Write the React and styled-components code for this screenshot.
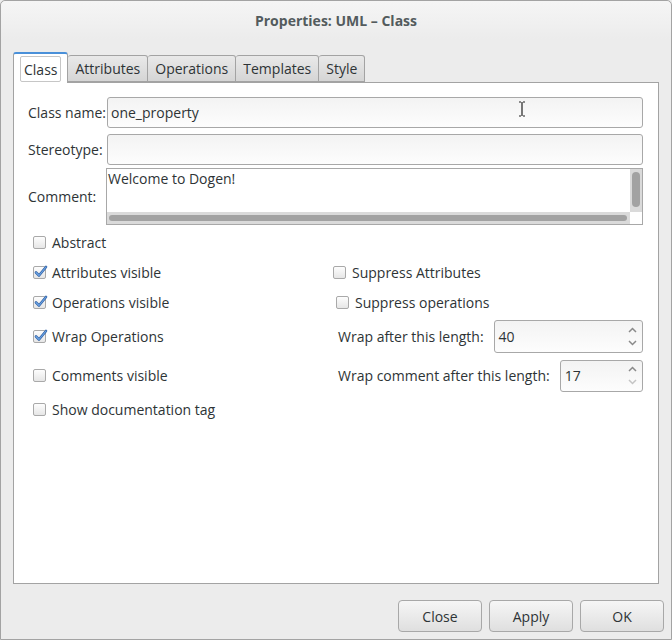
import React from 'react';
import styled, { createGlobalStyle } from 'styled-components';

const GlobalStyle = createGlobalStyle`
    html, body {
        margin: 0;
        padding: 0;
        background: #ececec;
    }
    body {
        font-family: "Open Sans", "DejaVu Sans", sans-serif;
        font-size: 14px;
        color: #2e3436;
    }
`;

const Window = styled.div`
    width: 672px;
    height: 640px;
    box-sizing: border-box;
    border: 1px solid #a3a3a3;
    border-radius: 5px 5px 0 0;
    background: #ececec;
    display: flex;
    flex-direction: column;
`;

const TitleBar = styled.div`
    height: 38px;
    flex: none;
    display: flex;
    align-items: center;
    justify-content: center;
    font-weight: 700;
    font-size: 14px;
    color: #535b5d;
    background: linear-gradient(#f5f5f5, #ececec);
    border-radius: 5px 5px 0 0;
`;

const TabStrip = styled.div`
    display: flex;
    align-items: flex-end;
    margin: 12px 12px 0 12px;
    height: 31px;
    position: relative;
    z-index: 1;
`;

const Tab = styled.div`
    box-sizing: border-box;
    display: flex;
    align-items: center;
    justify-content: center;
    padding: 0 ${p => (p.active ? '6px' : '7px')};
    height: ${p => (p.active ? '31px' : '27px')};
    margin-bottom: ${p => (p.active ? '-1px' : '0')};
    border: 1px solid #a3a3a3;
    border-left-width: ${p => (p.first ? '1px' : '0')};
    border-bottom: ${p => (p.active ? 'none' : '1px solid #a3a3a3')};
    border-top: ${p => (p.active ? '2px solid #4a90d9' : '1px solid #a3a3a3')};
    border-radius: 3px 3px 0 0;
    background: ${p => (p.active ? '#fff' : 'linear-gradient(#e9e9e9, #d5d5d5)')};
    color: #2e3436;
`;

const FocusRing = styled.span`
    display: flex;
    align-items: center;
    padding: 0 3px;
    height: 24px;
    margin-top: 1px;
    border: 1px solid #c6c6c6;
    border-radius: 2px;
`;

const Panel = styled.div`
    flex: 1;
    margin: 0 12px;
    background: #fff;
    border: 1px solid #a3a3a3;
    padding: 14px 15px 0 14px;
`;

const FieldGrid = styled.div`
    display: grid;
    grid-template-columns: 77px 1fr;
    grid-template-rows: 31px 34px 57px;
    column-gap: 2px;
    row-gap: 3px;
`;

const FieldLabel = styled.label`
    align-self: center;
    white-space: nowrap;
    margin-top: ${p => p.shift || 0}px;
`;

const TextInput = styled.div`
    position: relative;
    box-sizing: border-box;
    height: 31px;
    align-self: end;
    display: flex;
    align-items: center;
    padding: 0 3px;
    border: 1px solid #a8a8a8;
    border-radius: 3px;
    background: linear-gradient(#f3f3f3, #fdfdfd);
`;

const Cursor = styled.svg`
    position: absolute;
    left: 410px;
    top: 3px;
`;

const TextArea = styled.div`
    box-sizing: border-box;
    margin-left: -1px;
    display: grid;
    grid-template-columns: 1fr 12px;
    grid-template-rows: 1fr 12px;
    border: 1px solid #a8a8a8;
    background: #fff;
`;

const AreaText = styled.div`
    padding: 1px 0 0 1px;
    line-height: 18px;
`;

const VTrack = styled.div`
    background: #dadada;
    padding: 3px 2px 4px 2px;
`;

const HTrack = styled.div`
    background: #dadada;
    padding: 3px 3px 3px 2px;
`;

const Thumb = styled.div`
    background: #a2a2a2;
    border-radius: 4px;
    height: ${p => (p.vertical ? '35px' : '100%')};
    width: 100%;
`;

const Corner = styled.div`
    background: #fff;
`;

const Options = styled.div`
    display: grid;
    grid-template-columns: 300px 1fr;
    grid-template-rows: 30px 30px 30px 38px 41px 26px;
    margin-top: 2px;
    padding-left: 5px;
`;

const Option = styled.div`
    display: flex;
    align-items: center;
    gap: 6px;
    margin-left: ${p => p.indent || 0}px;
    grid-column: ${p => p.col || 'auto'};
`;

const Box = styled.span`
    position: relative;
    box-sizing: border-box;
    width: 13px;
    height: 13px;
    flex: none;
    border: 1px solid #a9a9a9;
    border-radius: 2px;
    background: linear-gradient(#fdfdfd, #e6e6e6);
`;

const Tick = styled.svg`
    position: absolute;
    left: 0;
    top: -2px;
`;

const SpinRow = styled.div`
    display: flex;
    align-items: center;
    padding-left: 5px;
    grid-column: 2;
    white-space: nowrap;
`;

const Spin = styled.div`
    box-sizing: border-box;
    flex: 1;
    margin-left: 10px;
    height: ${p => p.h}px;
    display: flex;
    align-items: center;
    justify-content: space-between;
    padding: 0 4px 0 4px;
    border: 1px solid #a8a8a8;
    border-radius: 3px;
    background: linear-gradient(#f3f3f3, #fdfdfd);
`;

const Arrows = styled.div`
    display: flex;
    flex-direction: column;
    gap: 7px;
    padding-right: 1px;
`;

const Footer = styled.div`
    flex: none;
    height: 55px;
    display: flex;
    justify-content: flex-end;
    align-items: flex-start;
    gap: 7px;
    padding: 16px 7px 0 0;
    box-sizing: border-box;
`;

const Button = styled.button`
    width: 84px;
    height: 32px;
    border: 1px solid #a8a8a8;
    border-radius: 4px;
    background: linear-gradient(#f6f6f6, #dfdfdf);
    font-family: inherit;
    font-size: 14px;
    color: #2e3436;
    padding: 0;
`;

const Chevron = ({ up, color }) => (
    <svg width="9" height="6" viewBox="0 0 9 6">
        <path
            d={up ? 'M1 5 L4.5 1.5 L8 5' : 'M1 1 L4.5 4.5 L8 1'}
            fill="none"
            stroke={color}
            strokeWidth="1.5"
        />
    </svg>
);

const Check = ({ checked, label, indent, col }) => (
    <Option indent={indent} col={col}>
        <Box>
            {checked && (
                <Tick width="14" height="13" viewBox="0 0 14 13">
                    <path d="M2 7.5 L5 10.5 L12 2" fill="none" stroke="#3565a8" strokeWidth="2.6" strokeLinecap="round" strokeLinejoin="round" />
                    <path d="M2 7.5 L5 10.5 L12 2" fill="none" stroke="#6ea6e6" strokeWidth="1.1" strokeLinecap="round" strokeLinejoin="round" />
                </Tick>
            )}
        </Box>
        <span>{label}</span>
    </Option>
);

const Spinner = ({ value, h, downColor = '#8a8a8a' }) => (
    <Spin h={h}>
        <span>{value}</span>
        <Arrows>
            <Chevron up color="#8a8a8a" />
            <Chevron color={downColor} />
        </Arrows>
    </Spin>
);

const App = () => (
    <Window>
        <GlobalStyle />
        <TitleBar>Properties: UML – Class</TitleBar>
        <TabStrip>
            <Tab active first><FocusRing>Class</FocusRing></Tab>
            <Tab>Attributes</Tab>
            <Tab>Operations</Tab>
            <Tab>Templates</Tab>
            <Tab>Style</Tab>
        </TabStrip>
        <Panel>
            <FieldGrid>
                <FieldLabel>Class name:</FieldLabel>
                <TextInput>
                    one_property
                    <Cursor width="8" height="16" viewBox="0 0 8 16">
                        <path d="M1 1 H3 M5 1 H7 M4 1 V15 M1 15 H3 M5 15 H7" stroke="#222" strokeWidth="1.2" fill="none" />
                    </Cursor>
                </TextInput>
                <FieldLabel shift={3}>Stereotype:</FieldLabel>
                <TextInput />
                <FieldLabel>Comment:</FieldLabel>
                <TextArea>
                    <AreaText>Welcome to Dogen!</AreaText>
                    <VTrack><Thumb vertical /></VTrack>
                    <HTrack><Thumb /></HTrack>
                    <Corner />
                </TextArea>
            </FieldGrid>
            <Options>
                <Check label="Abstract" col="1" />
                <div />
                <Check checked label="Attributes visible" />
                <Check label="Suppress Attributes" />
                <Check checked label="Operations visible" />
                <Check label="Suppress operations" indent={3} />
                <Check checked label="Wrap Operations" />
                <SpinRow>
                    Wrap after this length:
                    <Spinner value="40" h={33} />
                </SpinRow>
                <Check label="Comments visible" />
                <SpinRow>
                    Wrap comment after this length:
                    <Spinner value="17" h={32} downColor="#c4c4c4" />
                </SpinRow>
                <Check label="Show documentation tag" />
            </Options>
        </Panel>
        <Footer>
            <Button>Close</Button>
            <Button>Apply</Button>
            <Button>OK</Button>
        </Footer>
    </Window>
);

export default App;
